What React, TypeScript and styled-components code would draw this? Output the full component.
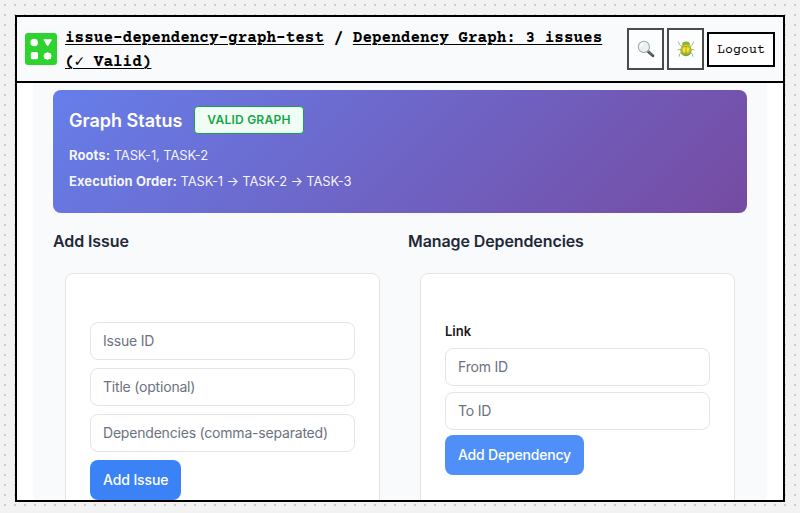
import React from "react";
import styled, { createGlobalStyle } from "styled-components";

const GlobalStyle = createGlobalStyle`
  *, *::before, *::after { box-sizing: border-box; }
  html, body { margin: 0; padding: 0; overflow: hidden; }
  body {
    font-family: Inter, "Liberation Sans", sans-serif;
    color: #18181b;
  }
  h2, h3, p { margin: 0; }
`;

const mono = `"Courier Prime", "Courier 10 Pitch", "Liberation Mono", monospace`;

const Desktop = styled.div`
  height: 513px;
  padding: 15px 15px 11px;
  background-color: #f2f2f2;
  background-image: linear-gradient(90deg, #f2f2f2 4px, transparent 4px 6px, #f2f2f2 6px),
    linear-gradient(#f2f2f2 4px, #cccccc 4px 6px, #f2f2f2 6px);
  background-size: 10px 10px;
`;

const Frame = styled.div`
  height: 487px;
  border: 2px solid #000;
  background: #fff;
  display: flex;
  flex-direction: column;
  overflow: hidden;
`;

const Header = styled.header`
  flex: none;
  height: 66px;
  display: flex;
  align-items: center;
  padding: 0 8px;
  background: #f9fafc;
  border-bottom: 2px solid #000;
`;

const LogoSvg = styled.svg`
  flex: none;
  display: block;
  margin-right: 8px;
`;

const Crumbs = styled.div`
  flex: 1;
  padding-top: 2px;
  font: 700 16px/24px ${mono};
  color: #000;
`;

const Crumb = styled.a`
  text-decoration: underline;
  text-decoration-thickness: 1px;
  text-underline-offset: 2px;
`;

const Actions = styled.div`
  flex: none;
  display: flex;
  align-items: center;
  gap: 3px;
`;

const IconButton = styled.button`
  width: 37px;
  height: 42px;
  padding: 0;
  display: flex;
  align-items: center;
  justify-content: center;
  border: 2px solid #4a4a4a;
  background: #fcfdfe;
`;

const LogoutButton = styled.button`
  width: 68px;
  height: 35px;
  padding: 3px 0 0;
  border: 2px solid #000;
  background: #fff;
  color: #000;
  font: 400 13.33px ${mono};
`;

const Content = styled.main`
  flex: 1;
  min-height: 0;
  margin: 0 16px;
  padding: 7px 20px 0;
  background: #f9fafc;
  overflow: hidden;
`;

const StatusCard = styled.section`
  height: 123px;
  padding: 16px;
  border-radius: 8px;
  color: #fff;
  background: linear-gradient(135deg, #667eea 0%, #764ba2 100%);
`;

const StatusHead = styled.div`
  display: flex;
  align-items: center;
  gap: 12px;
  height: 28px;
  margin-bottom: 11px;
`;

const StatusTitle = styled.h2`
  font-size: 18px;
  line-height: 28px;
  font-weight: 600;
  padding-top: 2px;
`;

const Badge = styled.span`
  height: 28px;
  padding: 0 12px;
  border: 1px solid #16a34a;
  border-radius: 4px;
  background: #f0fdf4;
  color: #16a34a;
  font-size: 12px;
  line-height: 26px;
  font-weight: 600;
  letter-spacing: 0.24px;
`;

const StatusLine = styled.p`
  font-size: 13px;
  line-height: 20px;
  margin-bottom: 6px;
  letter-spacing: -0.12px;
  color: rgba(255, 255, 255, 0.95);

  strong {
    font-weight: 700;
    letter-spacing: 0.08px;
  }
`;

const Columns = styled.div`
  display: grid;
  grid-template-columns: 1fr 1fr;
  gap: 16px;
  margin-top: 16px;
`;

const ColumnTitle = styled.h3`
  font-size: 16px;
  line-height: 24px;
  font-weight: 600;
  letter-spacing: -0.1px;
  color: #1f2937;
`;

const FormCard = styled.div<{ $top: number; $gap: number }>`
  height: 270px;
  margin: 20px 12px 0;
  padding: ${(p) => p.$top}px 24px 24px;
  display: flex;
  flex-direction: column;
  align-items: flex-start;
  gap: ${(p) => p.$gap}px;
  border: 1px solid #e4e4e7;
  border-radius: 8px;
  background: #fff;
`;

const FieldLabel = styled.div`
  height: 20px;
  margin-bottom: 1px;
  font-size: 13px;
  line-height: 20px;
  font-weight: 600;
`;

const Field = styled.input`
  flex: none;
  width: 100%;
  height: 38px;
  padding: 0 12px 2px;
  border: 1px solid #e4e4e7;
  border-radius: 8px;
  outline: none;
  background: #fff;
  font: 400 14px Inter, "Liberation Sans", sans-serif;
  letter-spacing: -0.2px;

  &::placeholder {
    color: #6b7280;
    opacity: 1;
  }
`;

const PrimaryButton = styled.button<{ $soft?: boolean }>`
  flex: none;
  height: 40px;
  margin-top: ${(p) => (p.$soft ? "-1px" : "0")};
  padding: 0 13px 2px;
  border: 0;
  border-radius: 8px;
  background: ${(p) => (p.$soft ? "#4f8ff7" : "#3b82f6")};
  color: #fff;
  font: 500 14px Inter, "Liberation Sans", sans-serif;
  letter-spacing: ${(p) => (p.$soft ? "-0.2px" : "-0.12px")};
`;

const Logo = () => (
  <LogoSvg width="32" height="32" viewBox="0 0 32 32">
    <rect width="32" height="32" rx="3" fill="#2fd32f" />
    <g fill="#fff">
      <circle cx="9.2" cy="9.5" r="3.8" />
      <path d="M19 6.2h7.4q.8 0 .4.8l-3.3 5.6q-.8 1-1.6 0L18.6 7q-.3-.8.4-.8Z" />
      <rect x="5.8" y="19" width="7.2" height="7.2" rx="1.5" />
      <path d="m22.6 19 1.4 1 1.7.2.3 1.6.9 1.2-.9 1.3-.3 1.6-1.7.2-1.4.8-1.4-.8-1.7-.2-.3-1.6-.9-1.3.9-1.2.3-1.6 1.7-.2Z" />
    </g>
  </LogoSvg>
);

const SearchIcon = () => (
  <svg width="18" height="18" viewBox="0 0 18 18">
    <path d="m11 11.4 4.9 4.4" stroke="#494c4f" strokeWidth="2.8" strokeLinecap="round" />
    <path d="m10.6 10.6 4.8 4.3" stroke="#92979b" strokeWidth=".8" />
    <circle cx="6.9" cy="6.9" r="5.6" fill="#eaf1f5" stroke="#a5a9ad" strokeWidth="1.1" />
    <path d="M3.5 6.5a3.5 3.5 0 0 1 3.3-3" fill="none" stroke="#fff" strokeWidth="1.4" />
  </svg>
);

const BeetleIcon = () => (
  <svg width="18" height="18" viewBox="0 0 18 18">
    <defs>
      <radialGradient id="shell" cx="50%" cy="38%" r="62%">
        <stop offset="0" stopColor="#fbe52a" />
        <stop offset=".5" stopColor="#d3c822" />
        <stop offset="1" stopColor="#57a02e" />
      </radialGradient>
    </defs>
    <path
      d="M5 6.5 2.4 4.5 1.6 2M13 6.5l2.6-2 .8-2.5M4 9.5l-3 .2M14 9.5l3 .2M4.6 12.4l-2 1.6-.4 2.3M13.4 12.4l2 1.6.4 2.3"
      fill="none"
      stroke="#a3b792"
      strokeWidth="1"
      strokeLinecap="round"
    />
    <ellipse cx="9" cy="4.3" rx="3.8" ry="2.8" fill="#86b432" />
    <ellipse cx="9" cy="10.3" rx="5.6" ry="6" fill="url(#shell)" />
    <path d="M4.4 7.2Q9 5.4 13.6 7.2M9 6.6v9.4" fill="none" stroke="#a0901a" strokeWidth=".6" />
    <path d="M7 8v3.6M11 8v3.2" stroke="#fff06a" strokeWidth="1.1" strokeLinecap="round" />
  </svg>
);

export default function App() {
  return (
    <>
      <GlobalStyle />
      <Desktop>
        <Frame>
          <Header>
            <Logo />
            <Crumbs>
              <Crumb>issue-dependency-graph-test</Crumb> / <Crumb>Dependency Graph: 3 issues<br />(✓ Valid)</Crumb>
            </Crumbs>
            <Actions>
              <IconButton aria-label="Search"><SearchIcon /></IconButton>
              <IconButton aria-label="Debug"><BeetleIcon /></IconButton>
              <LogoutButton>Logout</LogoutButton>
            </Actions>
          </Header>
          <Content>
            <StatusCard>
              <StatusHead>
                <StatusTitle>Graph Status</StatusTitle>
                <Badge>VALID GRAPH</Badge>
              </StatusHead>
              <StatusLine><strong>Roots:</strong> TASK-1, TASK-2</StatusLine>
              <StatusLine><strong>Execution Order:</strong> TASK-1 → TASK-2 → TASK-3</StatusLine>
            </StatusCard>
            <Columns>
              <section>
                <ColumnTitle>Add Issue</ColumnTitle>
                <FormCard $top={48} $gap={8}>
                  <Field placeholder="Issue ID" />
                  <Field placeholder="Title (optional)" />
                  <Field placeholder="Dependencies (comma-separated)" />
                  <PrimaryButton>Add Issue</PrimaryButton>
                </FormCard>
              </section>
              <section>
                <ColumnTitle>Manage Dependencies</ColumnTitle>
                <FormCard $top={47} $gap={6}>
                  <FieldLabel>Link</FieldLabel>
                  <Field placeholder="From ID" />
                  <Field placeholder="To ID" />
                  <PrimaryButton $soft>Add Dependency</PrimaryButton>
                </FormCard>
              </section>
            </Columns>
          </Content>
        </Frame>
      </Desktop>
    </>
  );
}
